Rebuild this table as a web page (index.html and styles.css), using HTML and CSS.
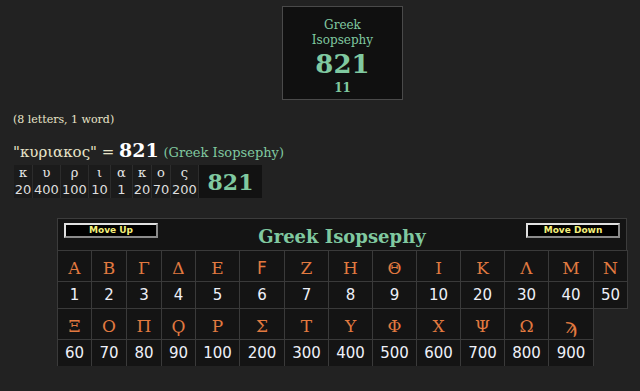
FILE: index.html
```html
<!DOCTYPE html>
<html>
<head>
<meta charset="utf-8">
<link rel="stylesheet" href="styles.css">
</head>
<body>
<div class="page">
  <div class="summary">
    <div class="sum-name">Greek<br>Isopsephy</div>
    <div class="sum-total">821</div>
    <div class="sum-count">11</div>
  </div>
  <div class="meta">(8 letters, 1 word)</div>
  <div class="phrase"><span class="q">"κυριακος" = </span><span class="val">821</span> <span class="cipher">(Greek Isopsephy)</span></div>
  <div class="breakdown">
    <div class="bd-cells">
      <div class="bd-l">κ</div><div class="bd-l">υ</div><div class="bd-l">ρ</div><div class="bd-l">ι</div><div class="bd-l">α</div><div class="bd-l">κ</div><div class="bd-l">ο</div><div class="bd-l">ς</div>
      <div class="bd-n">20</div><div class="bd-n">400</div><div class="bd-n">100</div><div class="bd-n">10</div><div class="bd-n">1</div><div class="bd-n">20</div><div class="bd-n">70</div><div class="bd-n">200</div>
    </div>
    <div class="bd-total">821</div>
  </div>
  <div class="chart">
    <div class="chart-head">
      <button class="btn">Move Up</button>
      <div class="chart-title">Greek Isopsephy</div>
      <button class="btn">Move Down</button>
    </div>
    <div class="grid">
      <div class="lt">Α</div><div class="lt">Β</div><div class="lt">Γ</div><div class="lt">Δ</div><div class="lt">Ε</div><div class="lt dig">Ϝ</div><div class="lt">Ζ</div><div class="lt">Η</div><div class="lt">Θ</div><div class="lt">Ι</div><div class="lt">Κ</div><div class="lt">Λ</div><div class="lt">Μ</div><div class="lt">Ν</div>
      <div class="nm">1</div><div class="nm">2</div><div class="nm">3</div><div class="nm">4</div><div class="nm">5</div><div class="nm">6</div><div class="nm">7</div><div class="nm">8</div><div class="nm">9</div><div class="nm">10</div><div class="nm">20</div><div class="nm">30</div><div class="nm">40</div><div class="nm">50</div>
      <div class="lt">Ξ</div><div class="lt">Ο</div><div class="lt">Π</div><div class="lt">Ϙ</div><div class="lt">Ρ</div><div class="lt">Σ</div><div class="lt">Τ</div><div class="lt">Υ</div><div class="lt">Φ</div><div class="lt">Χ</div><div class="lt">Ψ</div><div class="lt">Ω</div><div class="lt sampi">ϡ</div><div class="empty"></div>
      <div class="nm">60</div><div class="nm">70</div><div class="nm">80</div><div class="nm">90</div><div class="nm">100</div><div class="nm">200</div><div class="nm">300</div><div class="nm">400</div><div class="nm">500</div><div class="nm">600</div><div class="nm">700</div><div class="nm">800</div><div class="nm">900</div><div class="empty"></div>
    </div>
  </div>
</div>
</body>
</html>
```

FILE: styles.css
```css
html, body {
  margin: 0;
  padding: 0;
  background: #222222;
}
body {
  font-family: "DejaVu Serif", serif;
  color: #e8e4c9;
}
.page {
  display: flex;
  flex-direction: column;
  align-items: flex-start;
  padding-top: 6px;
}
.summary {
  margin-left: 282px;
  width: 119px;
  height: 92px;
  border: 1px solid #4a4a4a;
  background: #101010;
  display: flex;
  flex-direction: column;
  align-items: center;
  color: #80c9a0;
  box-sizing: content-box;
}
.sum-name {
  margin-top: 11px;
  font-size: 12px;
  line-height: 15px;
  text-align: center;
}
.sum-total {
  font-size: 26px;
  font-weight: bold;
  line-height: 28px;
  margin-top: 2px;
}
.sum-count {
  font-size: 12px;
  font-weight: bold;
  line-height: 14px;
  margin-top: 3px;
}
.meta {
  margin-left: 13px;
  margin-top: 13px;
  font-size: 11px;
  line-height: 14px;
  color: #e8e4c9;
}
.phrase {
  margin-left: 13px;
  margin-top: 12px;
  font-size: 15px;
  line-height: 22px;
  color: #e8e4c9;
  white-space: nowrap;
}
.phrase .val {
  font-size: 19px;
  font-weight: bold;
  color: #ffffff;
}
.phrase .cipher {
  font-size: 13px;
  color: #80c9a0;
}
.breakdown {
  margin-left: 14px;
  margin-top: 1px;
  display: flex;
  background: #161616;
}
.bd-cells {
  display: grid;
  grid-template-columns: 19px 28px 28px 22px 22px 19px 19px 28px;
  grid-template-rows: 16px 17px;
}
.bd-l, .bd-n {
  display: flex;
  align-items: center;
  justify-content: center;
  border-right: 1px solid #2c2c2c;
  background: #1b1b1b;
  color: #e6e6e6;
}
.bd-l {
  font-size: 13px;
  line-height: 14px;
}
.bd-n {
  font-family: "DejaVu Sans", sans-serif;
  font-size: 13px;
  line-height: 14px;
  color: #dedede;
}
.bd-total {
  width: 63px;
  display: flex;
  align-items: center;
  justify-content: center;
  font-size: 22px;
  font-weight: bold;
  color: #80c9a0;
  background: #121212;
}
.chart {
  margin-left: 57px;
  margin-top: 20px;
  width: 570px;
}
.chart-head {
  height: 32px;
  border: 1px solid #3c3c3c;
  border-bottom: none;
  background: #141414;
  display: flex;
  align-items: flex-start;
  justify-content: space-between;
  padding: 4px 6px 0 6px;
  box-sizing: border-box;
}
.btn {
  width: 94px;
  height: 15px;
  padding: 0;
  background: #000000;
  border: 2px solid;
  border-color: #e0e0e0 #8a8a8a #8a8a8a #e0e0e0;
  color: #f4f07a;
  font-family: "DejaVu Sans", sans-serif;
  font-size: 9px;
  font-weight: bold;
  line-height: 11px;
}
.chart-title {
  margin-top: 2px;
  font-size: 18px;
  font-weight: bold;
  color: #80c9a0;
  line-height: 24px;
}
.grid {
  display: grid;
  grid-template-columns: 34px 35px 35px 34px 44px 45px 44px 44px 44px 44px 44px 44px 45px 34px;
  grid-template-rows: 31px 27px 31px 27px;
}
.lt, .nm {
  display: flex;
  align-items: center;
  justify-content: center;
  background: #141414;
  border: 1px solid #3a3a3a;
  margin: 0 -1px -1px 0;
}
.lt {
  color: #e27a40;
  font-size: 17px;
  padding-top: 3px;
  box-sizing: border-box;
}
.lt.dig {
  font-family: "DejaVu Sans", sans-serif;
}
.lt.sampi {
  font-size: 21px;
}
.nm {
  color: #eef0f8;
  font-family: "DejaVu Sans", sans-serif;
  font-size: 15px;
}
.empty {
  background: transparent;
}
```
